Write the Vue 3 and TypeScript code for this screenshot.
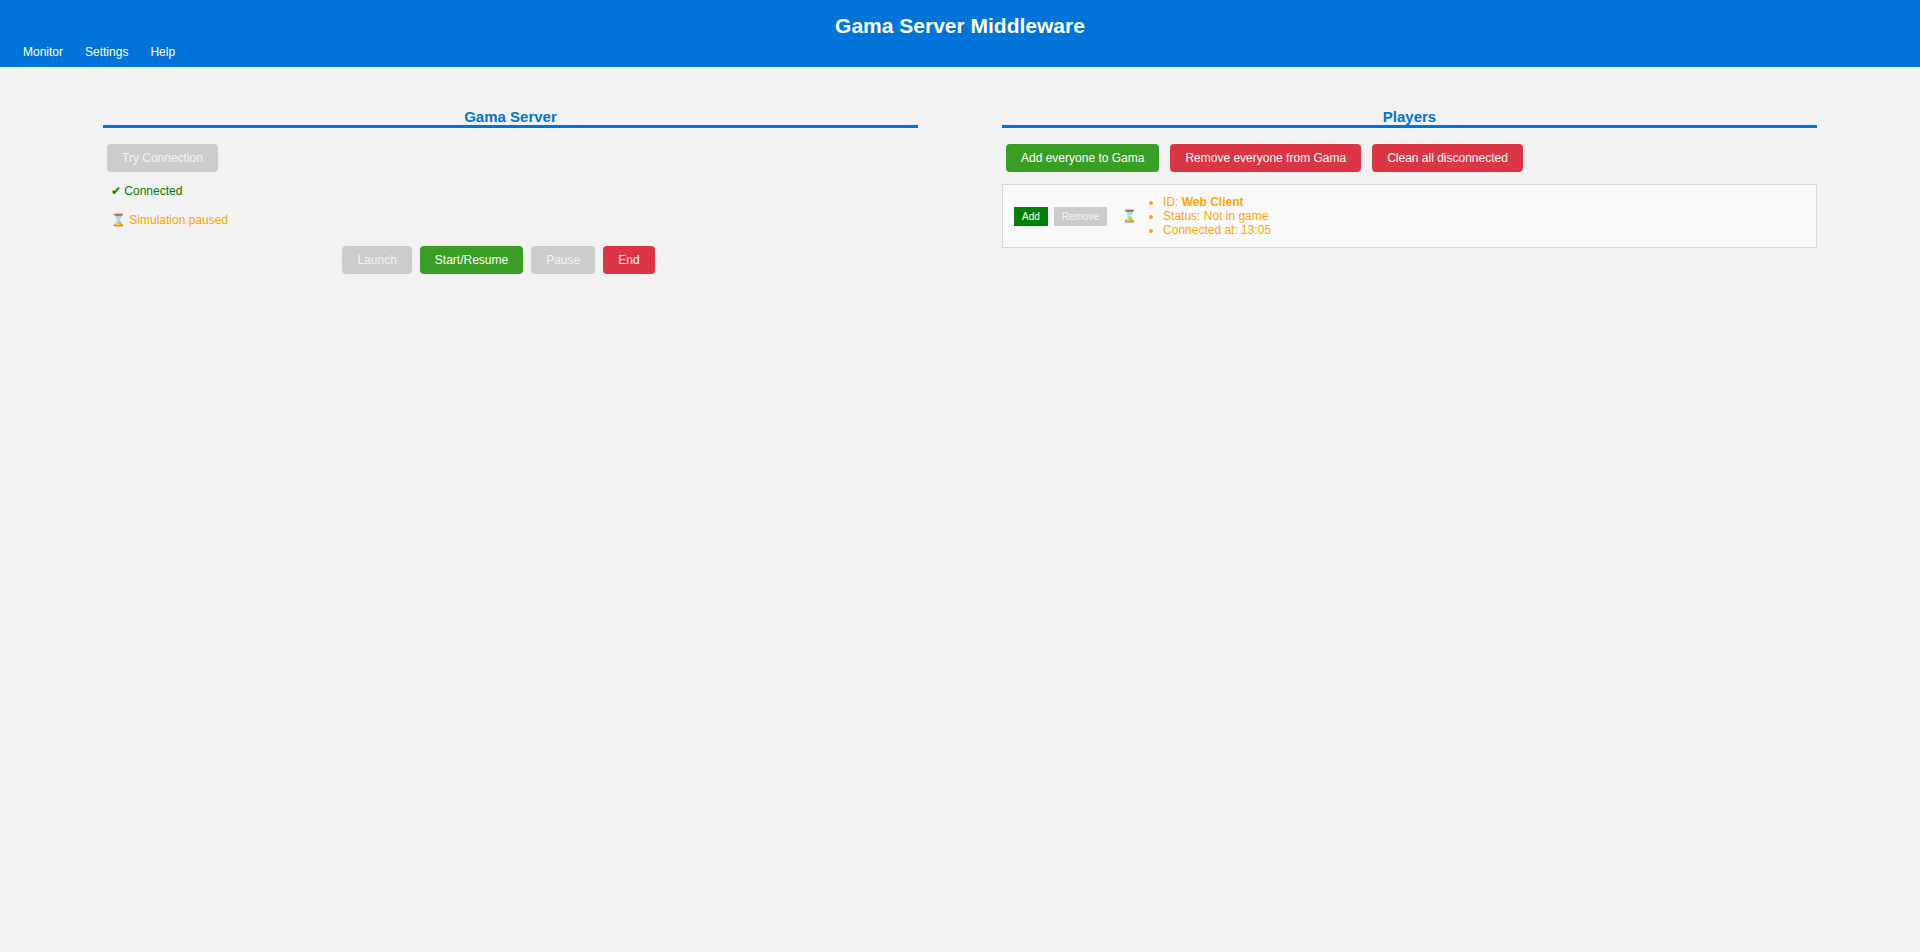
<script setup lang="ts">
interface Action {
  label: string
  kind: 'go' | 'stop'
  disabled?: boolean
}

interface Player {
  id: string
  status: string
  connectedAt: string
}

const links: string[] = ['Monitor', 'Settings', 'Help']

const simulationActions: Action[] = [
  { label: 'Launch', kind: 'go', disabled: true },
  { label: 'Start/Resume', kind: 'go' },
  { label: 'Pause', kind: 'stop', disabled: true },
  { label: 'End', kind: 'stop' },
]

const playerActions: Action[] = [
  { label: 'Add everyone to Gama', kind: 'go' },
  { label: 'Remove everyone from Gama', kind: 'stop' },
  { label: 'Clean all disconnected', kind: 'stop' },
]

const players: Player[] = [
  { id: 'Web Client', status: 'Not in game', connectedAt: '13:05' },
]
</script>

<template>
  <div class="page">
    <header class="header">
      <h1>Gama Server Middleware</h1>
      <nav class="nav">
        <a v-for="link in links" :key="link" href="#">{{ link }}</a>
      </nav>
    </header>

    <main class="columns">
      <section>
        <h2>Gama Server</h2>
        <div class="actions">
          <button type="button" class="btn go" disabled>Try Connection</button>
        </div>
        <p class="state connected">✔ Connected</p>
        <p class="state paused">⌛ Simulation paused</p>
        <div class="actions simulation">
          <button
            v-for="action in simulationActions"
            :key="action.label"
            type="button"
            class="btn"
            :class="action.kind"
            :disabled="action.disabled"
          >{{ action.label }}</button>
        </div>
      </section>

      <section>
        <h2>Players</h2>
        <div class="actions everyone">
          <button
            v-for="action in playerActions"
            :key="action.label"
            type="button"
            class="btn"
            :class="action.kind"
          >{{ action.label }}</button>
        </div>
        <article v-for="player in players" :key="player.id" class="player">
          <button type="button" class="small">Add</button>
          <button type="button" class="small" disabled>Remove</button>
          <span class="hourglass">⌛</span>
          <ul>
            <li>ID: <b>{{ player.id }}</b></li>
            <li>Status: {{ player.status }}</li>
            <li>Connected at: {{ player.connectedAt }}</li>
          </ul>
        </article>
      </section>
    </main>
  </div>
</template>

<style>
body {
  margin: 0;
  background: #f2f2f2;
}
</style>

<style scoped>
.page {
  font-family: "Liberation Sans", Arial, sans-serif;
  font-size: 12px;
  line-height: 14px;
}

.header {
  padding: 14px 0 8px;
  background: #0074d9;
  color: #fff;
}

h1 {
  margin: 0 0 7px;
  font-size: 21px;
  line-height: 24px;
  text-align: center;
}

.nav {
  display: flex;
  gap: 22px;
  padding: 0 23px;
}

.nav a {
  color: #fff;
  text-decoration: none;
}

.columns {
  display: grid;
  grid-template-columns: 1fr 1fr;
  gap: 84px;
  padding: 41px 103px;
}

h2 {
  margin: 0 0 12px;
  border-bottom: 3px solid #0074d9;
  color: #0074d9;
  font-size: 15px;
  line-height: 17px;
  text-align: center;
}

.actions {
  display: flex;
  gap: 8px;
  padding: 4px;
}

.everyone {
  gap: 11px;
}

.simulation {
  justify-content: center;
  padding-right: 28px;
}

.btn {
  padding: 7px 15px;
  border: 0;
  border-radius: 4px;
  color: #fff;
  font: inherit;
}

.go {
  background: #399e24;
}

.stop {
  background: #dc3545;
}

.btn:disabled,
.small:disabled {
  background: #ccc;
  color: #f4f4f4;
}

.state {
  margin: 8px 8px 15px;
}

.connected {
  color: #008000;
}

.paused {
  color: #ffa500;
}

.player {
  display: flex;
  align-items: center;
  margin-top: 8px;
  padding: 10px 11px;
  border: 1px solid #d8d8d8;
  background: #f9f9f9;
  color: #ffa500;
}

.small {
  margin-right: 6px;
  padding: 3px 8px;
  border: 0;
  background: #008000;
  color: #fff;
  font-family: inherit;
  font-size: 10px;
  line-height: 13px;
}

.hourglass {
  margin-left: 9px;
}

ul {
  margin: 0;
  padding-left: 26px;
}
</style>
